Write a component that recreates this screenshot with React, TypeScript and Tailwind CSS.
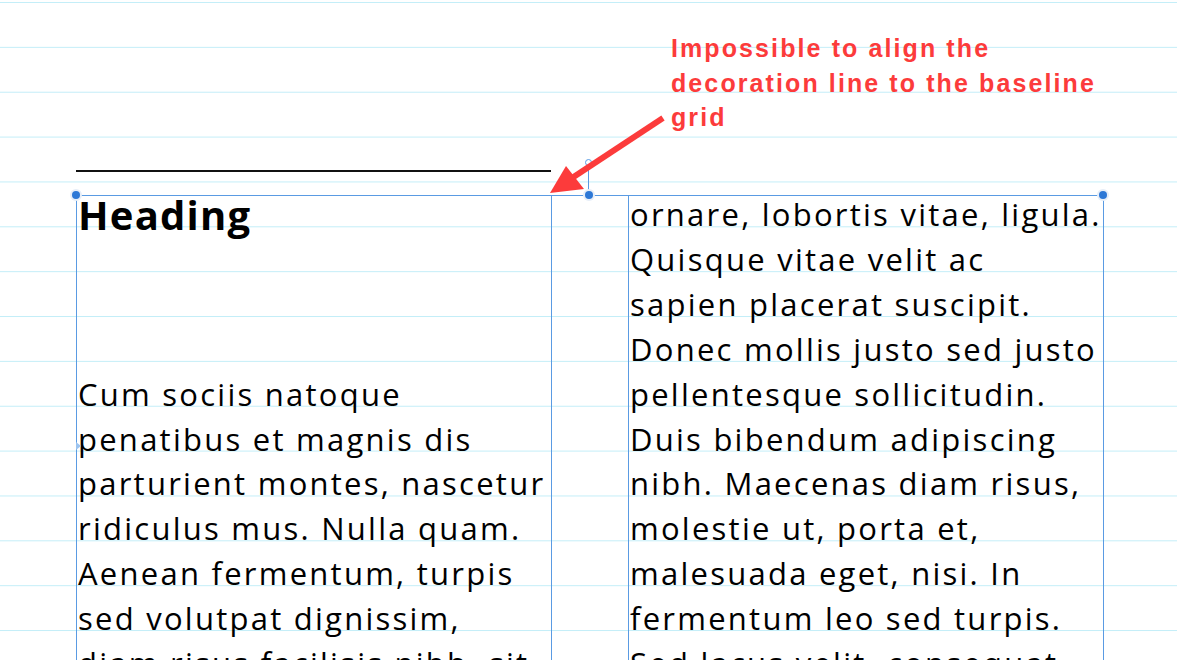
import React from "react";

const LH = 44.86;

const leftLines = [
  "Cum sociis natoque",
  "penatibus et magnis dis",
  "parturient montes, nascetur",
  "ridiculus mus. Nulla quam.",
  "Aenean fermentum, turpis",
  "sed volutpat dignissim,",
  "diam risus facilisis nibh, sit",
];

const rightLines = [
  "ornare, lobortis vitae, ligula.",
  "Quisque vitae velit ac",
  "sapien placerat suscipit.",
  "Donec mollis justo sed justo",
  "pellentesque sollicitudin.",
  "Duis bibendum adipiscing",
  "nibh. Maecenas diam risus,",
  "molestie ut, porta et,",
  "malesuada eget, nisi. In",
  "fermentum leo sed turpis.",
  "Sed lacus velit, consequat",
];

function Grid() {
  const ys: number[] = [];
  for (let i = 0; i < 16; i++) ys.push(2.5 + i * LH);
  return (
    <svg className="absolute inset-0" width="1177" height="660">
      {ys.map((y, i) => (
        <line key={i} x1="0" x2="1177" y1={y} y2={y} stroke="#c4eef8" strokeWidth="1" />
      ))}
    </svg>
  );
}

function Lines({ lines }: { lines: string[] }) {
  return (
    <div className="-mt-[3.7px] flex shrink-0 flex-col">
      {lines.map((l, i) => (
        <div key={i} className="h-[44.86px] shrink-0 leading-[44.86px] whitespace-nowrap">
          {l}
        </div>
      ))}
    </div>
  );
}

const Handle = ({ className }: { className: string }) => (
  <div className={`absolute w-[8px] h-[8px] rounded-full bg-[#2d78d6] ring-2 ring-[#e6eef8] ${className}`} />
);

export default function App() {
  return (
    <div className="relative w-[1177px] h-[660px] overflow-hidden bg-white text-black">
      <Grid />
      <div className="relative flex flex-col pl-[76px] pt-[170px]">
        <div className="w-[475px] h-[2px] bg-[#111]" />
        <div className="mt-[23px] flex w-[1028px] gap-[76px] border-t border-[#5a9be3] font-['Open_Sans',sans-serif] text-[31px] tracking-[2.25px]">
          <div className="flex h-[500px] w-[476px] flex-col border-x border-[#5a9be3] pl-[1px]">
            <div className="h-[179.44px] shrink-0">
              <div className="leading-[38px] text-[40px] font-bold tracking-[1.2px]">Heading</div>
            </div>
            <Lines lines={leftLines} />
          </div>
          <div className="flex h-[500px] w-[476px] flex-col border-x border-[#5a9be3] pl-[1px]">
            <Lines lines={rightLines} />
          </div>
        </div>
      </div>

      {/* selection handles */}
      <div className="absolute left-[588px] top-[165px] w-[1px] h-[30px] bg-[#5a9be3]" />
      <div className="absolute left-[585px] top-[159px] w-[7px] h-[7px] rounded-full border border-[#5a9be3] bg-white" />
      <Handle className="left-[72px] top-[191px]" />
      <Handle className="left-[585px] top-[191px]" />
      <Handle className="left-[1099px] top-[191px]" />
      <svg className="absolute left-[76px] top-[442px]" width="6" height="8">
        <path d="M0 0 L5 4 L0 8 Z" fill="#9cc4f0" />
      </svg>

      {/* annotation */}
      <div className="absolute left-[671px] top-[31px] font-['Liberation_Sans',Arial,sans-serif] font-bold text-[25px] tracking-[2.1px] leading-[34.5px] text-[#fc3b3b]">
        <div>Impossible to align the</div>
        <div>decoration line to the baseline</div>
        <div>grid</div>
      </div>
      <svg className="absolute left-0 top-0" width="1177" height="660">
        <line x1="663" y1="118" x2="572" y2="178" stroke="#fc3b3b" strokeWidth="6" />
        <path d="M550 193 L566 166 L584 189 Z" fill="#fc3b3b" />
      </svg>
    </div>
  );
}
